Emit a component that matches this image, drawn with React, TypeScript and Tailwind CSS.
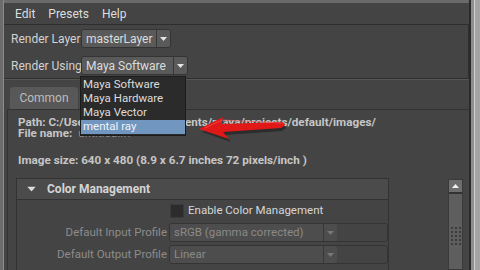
import React from 'react';

const Caret = ({ className = '' }: { className?: string }) => (
	<svg width="7" height="4" viewBox="0 0 7 4" className={className}>
		<path d="M0 0 L7 0 L3.5 4 Z" fill="currentColor" />
	</svg>
);

type DropProps = {
	value: string;
	fieldW: string;
	disabled?: boolean;
};

const Dropdown: React.FC<DropProps> = ({ value, fieldW, disabled }) => (
	<div className="flex shrink-0 h-[19px] rounded-[3px] border border-[#343434]">
		<div
			className={`${fieldW} shrink-0 flex items-center pl-[4px] rounded-l-[2px] whitespace-nowrap ${
				disabled ? 'bg-[#4d4d4d] text-[#8a8a8a]' : 'bg-[#5a5a5a] text-[#dcdcdc]'
			}`}
		>
			{value}
		</div>
		<div
			className={`w-[14px] shrink-0 flex items-center justify-center border-l border-[#383838] rounded-r-[2px] ${
				disabled ? 'bg-[#4d4d4d] text-[#777]' : 'bg-[#5a5a5a] text-[#e6e6e6]'
			}`}
		>
			<Caret />
		</div>
	</div>
);

export default function App() {
	return (
		<div className="relative w-[480px] h-[270px] overflow-hidden bg-[#444] flex font-['Roboto',Arial,sans-serif] text-[12px] leading-none select-none">
			{/* left window frame */}
			<div className="w-[4px] bg-[#6c6c6c] border-r border-[#8c8c8c]" />

			<div className="flex-1 flex flex-col min-w-0">
				<div className="h-[3px] bg-[#6a6a6a]" />

				{/* menu bar */}
				<div className="h-[21px] flex items-center pl-[11px] gap-[13px] text-[#dedede]">
					<span>Edit</span>
					<span>Presets</span>
					<span>Help</span>
				</div>

				{/* render layer / renderer */}
				<div className="border-t border-b border-r border-[#2e2e2e] pt-[4px] pb-[3px] pl-[7px] flex flex-col gap-[8px]">
					<div className="flex items-center">
						<span className="w-[70px] shrink-0 whitespace-nowrap text-[#d2d2d2]">Render Layer</span>
						<Dropdown value="masterLayer" fieldW="w-[74px]" />
					</div>
					<div className="flex items-center">
						<span className="w-[70px] shrink-0 whitespace-nowrap text-[#d2d2d2]">Render Using</span>
						<Dropdown value="Maya Software" fieldW="w-[91px]" />
					</div>
				</div>

				{/* tabs */}
				<div className="h-[30px] flex items-end pl-[6px] gap-[1px] border-t border-[#565656]">
					<div className="w-[68px] h-[22px] bg-[#585858] rounded-t-[3px] flex items-center justify-center text-[#bcbcbc]">
						Common
					</div>
					<div className="w-[104px] h-[22px] bg-[#4c4c4c] rounded-t-[3px] flex items-center justify-center text-[#bcbcbc]">
						Maya Software
					</div>
				</div>

				{/* tab content */}
				<div className="flex-1 ml-[3px] border-l border-t border-[#333] flex flex-col">
					<div className="pl-[10px] pt-[7px] font-bold text-[11.7px] leading-[11px] text-[#c6c6c6]">
						<div className="whitespace-nowrap">Path: C:/Users/adminpc/Documents/maya/projects/default/images/</div>
						<div className="whitespace-nowrap">
							File name:&nbsp; <span className="text-[#8e8e8e] font-normal">untitled.iff</span>
						</div>
						<div className="mt-[16px] whitespace-nowrap">
							Image size: 640 x 480 (8.9 x 6.7 inches 72 pixels/inch )
						</div>
					</div>

					<div className="mt-[12px] flex flex-1 items-stretch">
						{/* Color Management frame */}
						<div className="ml-[8px] w-[373px] flex flex-col">
							<div className="h-[22px] bg-[#4b4b4b] border border-[#333] flex items-center">
								<Caret className="ml-[11px] text-[#dcdcdc] scale-125" />
								<span className="ml-[12px] font-bold text-[#d4d4d4]">Color Management</span>
							</div>
							<div className="flex-1 border-l border-r border-[#333] pt-[4px]">
								<div className="grid grid-cols-[150px_1fr] gap-x-[2px] items-center text-[11.5px]">
									<div />
									<div className="flex items-center gap-[4px] h-[14px] text-[#d6d6d6]">
										<div className="w-[14px] h-[14px] bg-[#2c2c2c] border border-[#3a3a3a] ml-[1px]" />
										<span>Enable Color Management</span>
									</div>

									<div className="text-right text-[#8c8c8c] mt-[5px]">Default Input Profile</div>
									<div className="mt-[5px]">
										<Dropdown value="sRGB (gamma corrected)" fieldW="w-[153px]" disabled />
									</div>

									<div className="text-right text-[#8c8c8c] mt-[3px]">Default Output Profile</div>
									<div className="mt-[3px]">
										<Dropdown value="Linear" fieldW="w-[153px]" disabled />
									</div>
								</div>
							</div>
						</div>

						<div className="flex-1" />

						{/* scrollbar */}
						<div className="w-[15px] mr-[6px] mt-[1px] flex flex-col border border-[#3a3a3a]">
							<div className="h-[14px] bg-[#6e6e6e] flex items-center justify-center border-b-2 border-[#333]">
								<Caret className="rotate-180 text-[#f0f0f0]" />
							</div>
							<div className="flex-1 bg-[#5e5e5e] flex justify-center pt-[33px]">
								<div className="grid grid-cols-3 gap-[2px] h-fit">
									{Array.from({ length: 15 }).map((_, i) => (
										<div key={i} className="w-[2px] h-[2px] bg-[#3c3c3c]" />
									))}
								</div>
							</div>
						</div>
					</div>
				</div>
			</div>

			{/* right window frame */}
			<div className="w-[11px] flex">
				<div className="w-[2px] bg-[#2a2a2a]" />
				<div className="w-[3px] bg-[#8e8e8e]" />
				<div className="w-[1px] bg-[#d0d0d0]" />
				<div className="flex-1 bg-[#a4a4a4]" />
			</div>

			{/* open renderer menu */}
			<div className="absolute left-[80px] top-[76px] w-[106px] bg-[#2b2b2b] border border-[#1c1c1c] py-[1px] text-[11.5px] text-[#dcdcdc]">
				<div className="h-[14px] flex items-center pl-[2px]">Maya Software</div>
				<div className="h-[14px] flex items-center pl-[2px]">Maya Hardware</div>
				<div className="h-[14px] flex items-center pl-[2px]">Maya Vector</div>
				<div className="h-[14px] flex items-center pl-[2px] bg-[#7196bf] text-[#eef3f9]">mental ray</div>
			</div>

			{/* red annotation arrow */}
			<svg className="absolute left-0 top-0 pointer-events-none" width="480" height="270" viewBox="0 0 480 270">
				<path
					d="M202 132 L225 120 L223 127 L284 125 L286 128 L282 131 L225 135 L231 142 Z"
					fill="#000"
					opacity="0.35"
				/>
				<path
					d="M199 129 L223 117 L221 124 L283 122 L285 125 L281 128 L223 132 L229 139 Z"
					fill="#e01818"
				/>
				<path d="M205 128 L222 120 L283 123" stroke="#ff5a5a" strokeWidth="1" fill="none" opacity="0.6" />
			</svg>
		</div>
	);
}
